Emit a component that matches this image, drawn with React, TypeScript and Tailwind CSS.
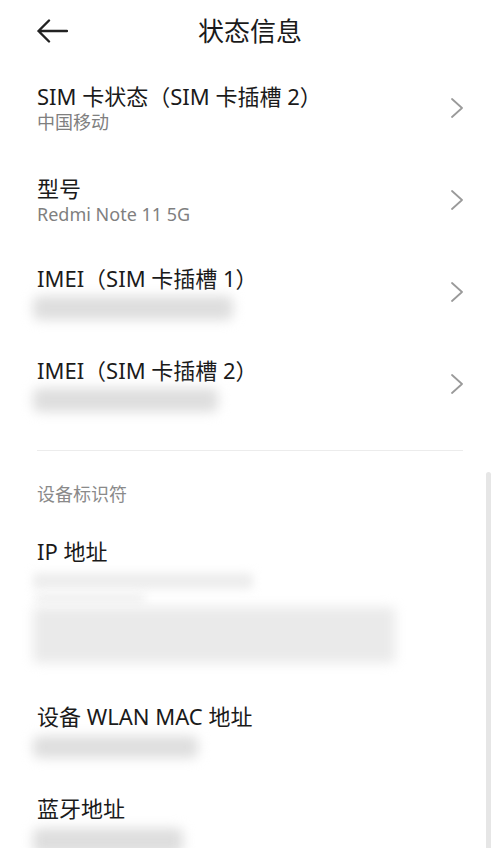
const font = { fontFamily: '"Noto Sans", "Noto Sans CJK SC", sans-serif' };

function Chevron() {
  return (
    <svg width="12" height="20" viewBox="0 0 12 20" className="shrink-0">
      <polyline points="1,1 11,10 1,19" fill="none" stroke="#9a9a9a" strokeWidth="1.8" strokeLinecap="round" strokeLinejoin="round" />
    </svg>
  );
}

function Blur({ w, h = "h-[24px]", extra = "" }: { w: string; h?: string; extra?: string }) {
  return <div className={`${w} ${h} ${extra} -ml-[4px] rounded-md bg-[#dedede] blur-[6px]`} />;
}

function NavRow({ title, sub, blurW }: { title: string; sub?: string; blurW?: string }) {
  return (
    <div className="flex h-[92px] items-center">
      <div className="flex flex-1 flex-col">
        <div className="text-[22px] leading-[28px] text-[#1a1a1a]">{title}</div>
        {sub && <div className="text-[18px] leading-[24px] text-[#7f7f7f]">{sub}</div>}
        {blurW && (
          <div className="pt-[4px]">
            <Blur w={blurW} />
          </div>
        )}
      </div>
      <Chevron />
    </div>
  );
}

export default function App() {
  return (
    <div className="relative h-[848px] w-[500px] overflow-hidden bg-white" style={font}>
      {/* Header */}
      <div className="flex h-[62px] items-center px-[37px]">
        <svg width="31" height="24" viewBox="0 0 31 24" className="shrink-0">
          <path d="M1.5 12 H30 M12 1.5 L1.5 12 L12 22.5" fill="none" stroke="#222" strokeWidth="2.4" strokeLinecap="round" strokeLinejoin="round" />
        </svg>
        <div className="flex-1 text-center text-[26px] leading-[32px] text-[#1a1a1a]">状态信息</div>
        <div className="w-[31px] shrink-0" />
      </div>

      {/* Rows */}
      <div className="px-[37px]">
        <NavRow title="SIM 卡状态（SIM 卡插槽 2）" sub="中国移动" />
        <NavRow title="型号" sub="Redmi Note 11 5G" />
        <NavRow title="IMEI（SIM 卡插槽 1）" blurW="w-[200px]" />
        <NavRow title="IMEI（SIM 卡插槽 2）" blurW="w-[185px]" />

        <div className="mt-[20px] h-px bg-[#ececec]" />

        <div className="mt-[31px] text-[18px] leading-[24px] text-[#8a8a8a]">设备标识符</div>

        <div className="mt-[31px] text-[22px] leading-[28px] text-[#1a1a1a]">IP 地址</div>
        <div className="mt-[8px] flex flex-col gap-[4px]">
          <div className="-ml-[4px] h-[16px] w-[220px] rounded bg-[#ededed] blur-[5px]" />
          <div className="-ml-[2px] h-[10px] w-[110px] rounded bg-[#f0f0f0] blur-[5px]" />
          <div className="-ml-[4px] h-[56px] w-[362px] rounded bg-[#eaeaea] blur-[6px]" />
        </div>

        <div className="mt-[39px] text-[22px] leading-[28px] text-[#1a1a1a]">设备 WLAN MAC 地址</div>
        <div className="pt-[6px]">
          <Blur w="w-[165px]" h="h-[22px]" />
        </div>

        <div className="mt-[36px] text-[22px] leading-[28px] text-[#1a1a1a]">蓝牙地址</div>
        <div className="pt-[6px]">
          <Blur w="w-[150px]" h="h-[26px]" />
        </div>
      </div>

      {/* Scrollbar overlay */}
      <div className="absolute right-[9px] top-[472px] h-[400px] w-[5px] rounded-full bg-[#e6e6e6]" />
    </div>
  );
}
